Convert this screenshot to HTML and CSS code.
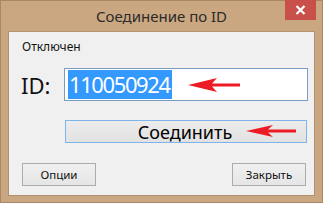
FILE: index.html
```html
<!DOCTYPE html>
<html>
<head>
<meta charset="utf-8">
<link rel="stylesheet" href="styles.css">
</head>
<body>
<div class="window">
  <div class="titlebar">
    <span class="title">Соединение по ID</span>
    <span class="close">
      <svg width="11" height="10" viewBox="0 0 11 10"><path d="M1.5 1 L9.5 9 M9.5 1 L1.5 9" stroke="#fff" stroke-width="2.2"/></svg>
    </span>
  </div>
  <div class="client">
    <div class="status">Отключен</div>
    <div class="idrow">
      <span class="idlabel">ID:</span>
      <div class="input">
        <span class="sel">110050924</span>
        <svg class="arrow arrow1" width="54" height="16" viewBox="0 0 54 16"><path d="M1 8 L30 1 L25 6.5 L53 6.5 L53 9.5 L25 9.5 L30 15 Z" fill="#ec1b24"/></svg>
      </div>
    </div>
    <div class="connect">
      <span>Соединить</span>
      <svg class="arrow arrow2" width="52" height="14" viewBox="0 0 52 14"><path d="M1 7 L28 1 L23 5.5 L51 5.5 L51 8.5 L23 8.5 L28 13 Z" fill="#ec1b24"/></svg>
    </div>
    <div class="footer">
      <div class="btn">Опции</div>
      <div class="btn">Закрыть</div>
    </div>
  </div>
</div>
</body>
</html>
```
FILE: styles.css
```css
html, body {
  margin: 0;
  padding: 0;
  background: #c7a57f;
}
.window {
  box-sizing: border-box;
  width: 323px;
  height: 203px;
  background: #caa780;
  border: 1px solid #a88860;
  padding: 0 7px 6px 7px;
  display: flex;
  flex-direction: column;
  font-family: "Noto Sans", "Open Sans", sans-serif;
}
.titlebar {
  position: relative;
  height: 30px;
  display: flex;
  align-items: center;
  justify-content: center;
}
.title {
  font-size: 15px;
  color: #2b2b2b;
  margin-top: -1px;
}
.close {
  position: absolute;
  right: -1px;
  top: -1px;
  width: 31px;
  height: 20px;
  background: #c9504a;
  display: flex;
  align-items: center;
  justify-content: center;
}
.client {
  flex: 1;
  background: #f0f0f0;
  border: 1px solid #b09070;
  border-top-color: #b59570;
  position: relative;
}
.status {
  font-size: 12px;
  color: #111;
  margin: 7px 0 0 13px;
  line-height: 16px;
}
.idrow {
  display: flex;
  align-items: center;
  margin-top: 13px;
}
.idlabel {
  font-size: 22px;
  color: #111;
  margin-left: 12px;
  width: 43px;
  line-height: 30px;
}
.input {
  position: relative;
  box-sizing: border-box;
  width: 244px;
  height: 33px;
  background: #fff;
  border: 1px solid #7a9cc0;
  padding: 1px 3px;
  display: flex;
  align-items: center;
}
.sel {
  background: #3399ff;
  color: #fff;
  font-size: 22px;
  line-height: 29px;
  height: 29px;
  padding: 0 2px 0 1px;
  letter-spacing: -1.4px;
}
.arrow {
  position: absolute;
}
.arrow1 {
  left: 122px;
  top: 8px;
}
.connect {
  position: relative;
  box-sizing: border-box;
  margin: 19px 0 0 56px;
  width: 242px;
  height: 23px;
  border: 1px solid #7eb4ea;
  background: linear-gradient(#ececec, #e2e2e2);
  display: flex;
  align-items: center;
  justify-content: center;
  font-size: 18px;
  color: #000;
}
.connect span {
  margin-left: -2px;
  line-height: 22px;
}
.arrow2 {
  left: 179px;
  top: 3px;
}
.footer {
  display: flex;
  justify-content: space-between;
  margin: 20px 8px 0 13px;
}
.btn {
  box-sizing: border-box;
  width: 74px;
  height: 23px;
  border: 1px solid #acacac;
  background: linear-gradient(#f0f0f0, #e5e5e5);
  font-size: 11.5px;
  color: #111;
  display: flex;
  align-items: center;
  justify-content: center;
}
```
